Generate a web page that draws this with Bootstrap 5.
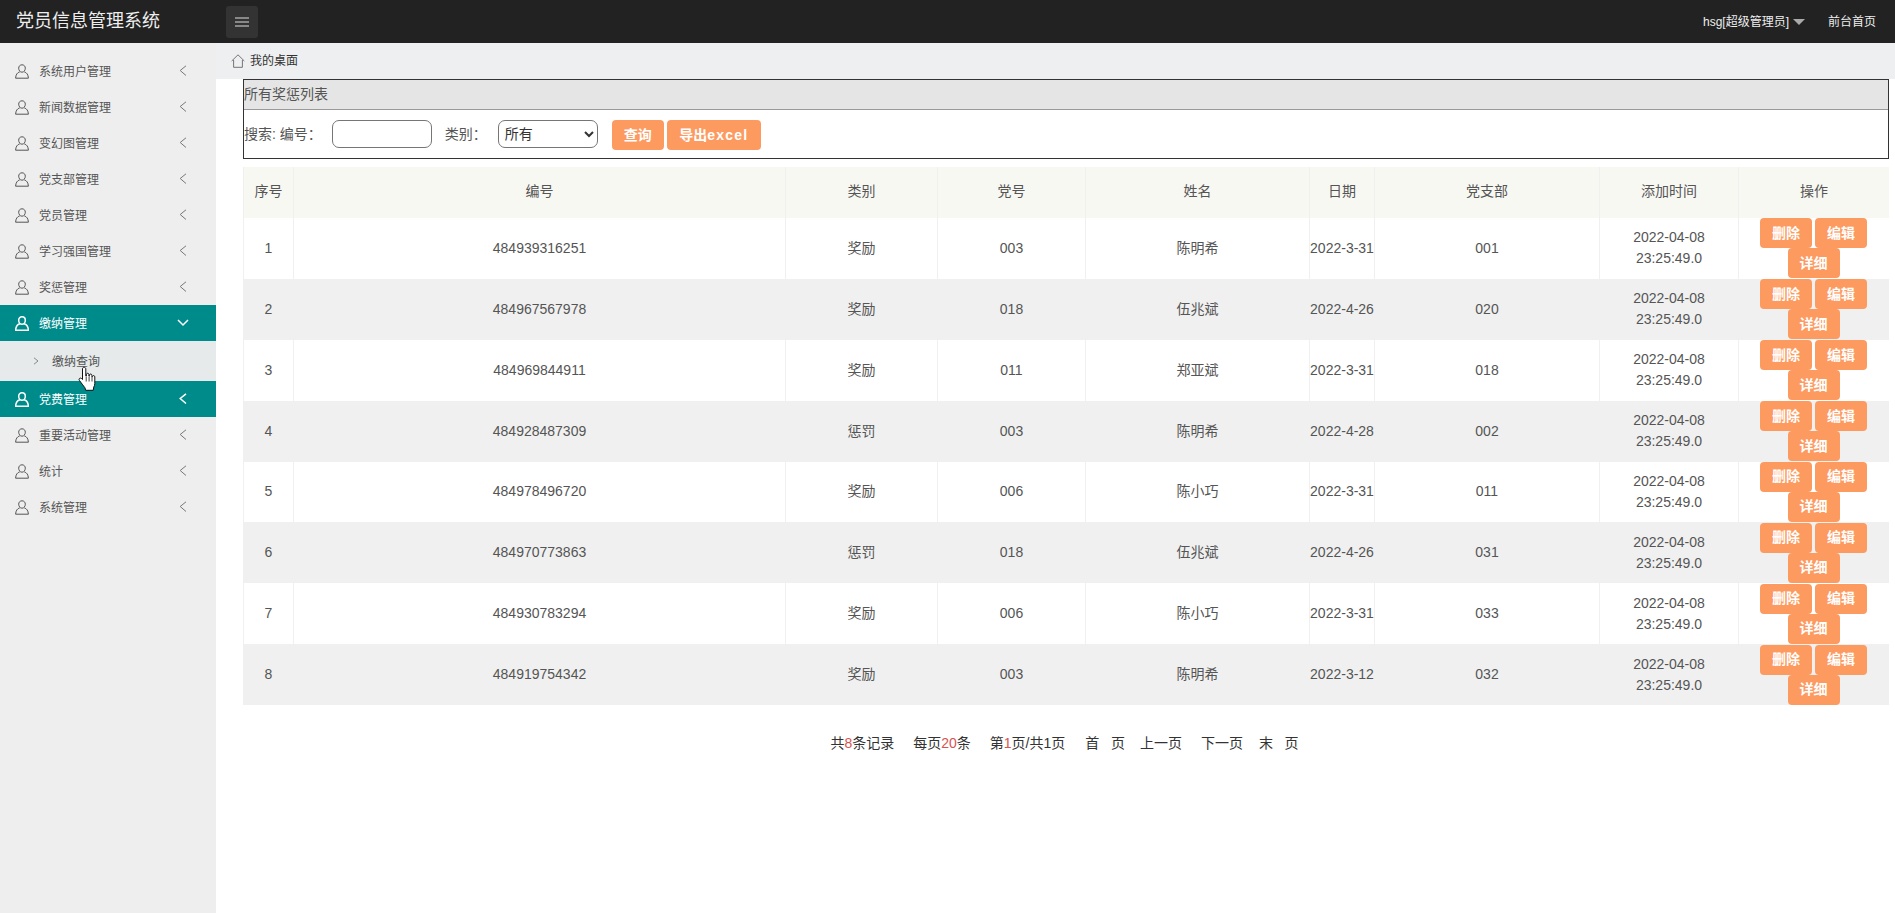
<!DOCTYPE html>
<html lang="zh-CN">
<head>
    <meta charset="UTF-8">
    <title>党员信息管理系统</title>
    <link href="https://cdn.jsdelivr.net/npm/bootstrap@5.3.3/dist/css/bootstrap.min.css" rel="stylesheet">
    <script src="https://cdn.jsdelivr.net/npm/bootstrap@5.3.3/dist/js/bootstrap.bundle.min.js"></script>

    <style>
        body {
            font-family: "Liberation Sans", "Noto Sans CJK SC", sans-serif;
            font-size: 14px;
            color: #333;
            height: 913px;
            overflow: hidden;
        }

        .top-bar {
            height: 43px;
            padding: 0;
            background-color: #222;
            color: #fff;
        }

        .top-title {
            width: 226px;
            padding-left: 16px;
            font-size: 18px;
            color: #eee;
        }

        .menu-toggle {
            width: 32px;
            height: 32px;
            padding: 0;
            background-color: #333;
            border: 0;
            border-radius: 3px;
        }

        .menu-toggle svg { display: block; margin: 0 auto; }

        .top-link {
            font-size: 12px;
            color: #eee;
            text-decoration: none;
        }

        .user-caret {
            width: 0;
            height: 0;
            margin: 0 23px 0 4px;
            border-left: 6px solid transparent;
            border-right: 6px solid transparent;
            border-top: 6px solid #aaa;
        }

        .top-home { margin-right: 19px; }

        .page-wrap { height: 870px; }

        .side-menu {
            width: 216px;
            flex-shrink: 0;
            padding-top: 10px;
            background-color: #eeeeef;
        }

        .side-item {
            height: 36px;
            padding: 0 29px 0 15px;
            font-size: 12px;
            color: #555;
        }

        .side-item .side-label {
            margin-left: 10px;
            padding-top: 2px;
        }

        .side-item.is-open {
            background-color: #008b8b;
            color: #fff;
        }

        .side-sub {
            height: 40px;
            padding-left: 33px;
            font-size: 12px;
            color: #555;
            background-color: #e6eaea;
        }

        .side-sub .side-label {
            margin-left: 13px;
            padding-top: 2px;
        }

        .main-area { min-width: 0; }

        .crumb-bar {
            height: 36px;
            padding-left: 15px;
            font-size: 12px;
            color: #333;
            background-color: #eeeff0;
        }

        .crumb-bar svg { margin-right: 5px; }

        .main-body { padding: 0 6px 0 27px; }

        .filter-box {
            height: 80px;
            border: 1px solid #333;
        }

        .filter-title {
            height: 30px;
            background-color: #e5e5e5;
            border-bottom: 1px solid #999;
            line-height: 29px;
            color: #555;
        }

        .filter-row { padding-top: 10px; color: #555; }

        .filter-row .form-control,
        .filter-row .form-select {
            width: 100px;
            height: 28px;
            padding: 0 4px;
            font-size: 14px;
            color: #333;
            border-color: #767676;
            border-radius: 7px;
            box-shadow: none;
        }

        .filter-row .form-select {
            padding-left: 2px;
            background-image: none;
            -webkit-appearance: auto;
            appearance: auto;
        }

        .label-no { margin: 0 10px 0 0; }
        .label-type { margin: 0 11px 0 13px; }

        .orange-btn {
            height: 30px;
            padding: 0;
            font-size: 14px;
            font-weight: 700;
            color: #fff;
            background-color: #fd9a5f;
            border: 0;
            border-radius: 4px;
        }

        .orange-btn:hover { color: #fff; background-color: #fd9a5f; }

        .btn-query { width: 52px; margin-left: 14px; }
        .btn-export { width: 94px; margin-left: 3px; }
        .wide-word { letter-spacing: 1.200px; }

        .record-table {
            width: 100%;
            margin: 8px 0 0;
            table-layout: fixed;
            color: #555;
        }

        .record-table > :not(caption) > * > * {
            height: 60.875px;
            padding: 0;
            text-align: center;
            vertical-align: middle;
            line-height: 21px;
            color: #555;
            border: 0;
            border-left: 1px solid #f0f0f0;
            box-shadow: none;
            background-color: transparent;
        }

        .record-table > thead > tr > th {
            height: 51px;
            padding-bottom: 2px;
            font-weight: 400;
            background-color: #f8f8f3;
        }

        .record-table > tbody > tr:nth-child(even) > td { background-color: #f0f0f0; }

        .record-table th:nth-child(1) { width: 50px; }
        .record-table th:nth-child(2) { width: 492px; }
        .record-table th:nth-child(3) { width: 152px; }
        .record-table th:nth-child(4) { width: 148px; }
        .record-table th:nth-child(5) { width: 224px; }
        .record-table th:nth-child(6) { width: 65px; }
        .record-table th:nth-child(7) { width: 225px; }
        .record-table th:nth-child(8) { width: 139px; }

        .record-table > tbody > tr > .action-cell {
            padding-right: 1px;
            font-size: 0;
        }

        .action-cell .orange-btn {
            width: 52px;
            margin: 0 1.5px;
            vertical-align: top;
        }

        .page-links {
            margin-top: 28px;
            padding-right: 3px;
            gap: 19px;
            line-height: 20px;
        }

        .page-num { color: #d9534f; }
        .link-first { margin-left: 1px; }
        .link-prev { margin-left: -4px; }
        .link-last { margin-left: -3px; }

        .hand-cursor {
            position: absolute;
            left: 78px;
            top: 366px;
        }
    </style>
</head>
<body>

<nav class="navbar top-bar flex-nowrap">
    <div class="top-title">党员信息管理系统</div>
    <button type="button" class="menu-toggle">
        <svg width="14" height="10" viewBox="0 0 14 10"><path d="M0 1h14M0 5h14M0 9h14" stroke="#ddd" stroke-width="1.2"/></svg>
    </button>
    <div class="d-flex align-items-center ms-auto">
        <a class="top-link" href="#">hsg[超级管理员]</a>
        <span class="user-caret"></span>
        <a class="top-link top-home" href="#">前台首页</a>
    </div>
</nav>

<div class="d-flex page-wrap">
    <aside class="side-menu" id="sideMenu"></aside>

    <main class="main-area flex-grow-1">
        <div class="crumb-bar d-flex align-items-center">
            <svg width="14" height="14" viewBox="0 0 14 14" fill="none" stroke="#666" stroke-width=".9"><path d="M.7 7 7 .8 13.3 7M2.6 6v7.3h8.8V6"/></svg>
            我的桌面
        </div>
        <div class="main-body">
            <div class="filter-box">
                <div class="filter-title">所有奖惩列表</div>
                <form class="filter-row d-flex align-items-start">
                    <label class="label-no lh-lg">搜索: 编号：</label>
                    <input type="text" class="form-control">
                    <label class="label-type lh-lg">类别：</label>
                    <select class="form-select"><option>所有</option></select>
                    <button type="button" class="btn orange-btn btn-query">查询</button>
                    <button type="button" class="btn orange-btn btn-export">导出<span class="wide-word">excel</span></button>
                </form>
            </div>

            <table class="table record-table">
                <thead>
                    <tr>
                        <th>序号</th><th>编号</th><th>类别</th><th>党号</th><th>姓名</th><th>日期</th><th>党支部</th><th>添加时间</th><th>操作</th>
                    </tr>
                </thead>
                <tbody id="recordRows"></tbody>
            </table>

            <div class="page-links d-flex justify-content-center">
                <span>共<span class="page-num">8</span>条记录</span>
                <span>每页<span class="page-num">20</span>条</span>
                <span>第<span class="page-num">1</span>页/共1页</span>
                <span class="link-first">首&nbsp;&nbsp;&nbsp;页</span>
                <span class="link-prev">上一页</span>
                <span>下一页</span>
                <span class="link-last">末&nbsp;&nbsp;&nbsp;页</span>
            </div>
        </div>
    </main>
</div>

<svg class="hand-cursor" width="20" height="26" viewBox="0 0 20 26">
    <path d="M6 1.2c1 0 1.8.8 1.8 1.8v7l.6-.1V8.600c0-1.800 2.500-1.800 2.500 0V10l.5.100V9.300c0-1.700 2.500-1.700 2.500 0v1.300l.5.100c0-1.500 2.400-1.500 2.400.2v6.500c0 1.500-.4 2.600-1 3.600l-.6 3.300H7.700l-.8-2.600C5.500 20 3 16.500 1.300 14.300c-1-1.400.8-3 2.200-1.800l1 1V3c0-1 .6-1.800 1.500-1.800z" fill="#fff" stroke="#111" stroke-width="1"/>
    <path d="M8.200 10.500v5M11.100 10.500v5M14 10.500v5" stroke="#111" stroke-width=".8"/>
</svg>

<script>
    const userIcon = color => `<svg width="14" height="15" viewBox="0 0 14 15" fill="none" stroke="${color}" stroke-width="${color === '#fff' ? 1.500 : 1}"><path d="M7 .8c2 0 3.300 1.400 3.300 3.400S9 8.200 7 8.200 3.700 6.200 3.700 4.200 5 .8 7 .8z"/><path d="M4.800 7.800C2.300 8.600.8 10.500.6 14.200h12.800c-.2-3.700-1.700-5.600-4.200-6.400"/></svg>`;
    const leftArrow = (color, width) => `<svg class="ms-auto" width="8" height="12" viewBox="0 0 8 12" fill="none" stroke="${color}" stroke-width="${width}"><path d="M7 .8 1.200 5.500 7 10.500"/></svg>`;
    const downArrow = `<svg class="ms-auto" width="12" height="8" viewBox="0 0 12 8" fill="none" stroke="#fff" stroke-width="1.500" style="margin-right:-2px"><path d="M1 1l5 5 5-5"/></svg>`;

    const menuItems = [
        { name: '系统用户管理' },
        { name: '新闻数据管理' },
        { name: '变幻图管理' },
        { name: '党支部管理' },
        { name: '党员管理' },
        { name: '学习强国管理' },
        { name: '奖惩管理' },
        { name: '缴纳管理', open: true, sub: '缴纳查询' },
        { name: '党费管理', active: true },
        { name: '重要活动管理' },
        { name: '统计' },
        { name: '系统管理' }
    ];

    document.getElementById('sideMenu').innerHTML = menuItems.map(item => {
        const highlighted = item.open || item.active;
        const arrow = item.open ? downArrow : (item.active ? leftArrow('#fff', 1.5) : leftArrow('#777', 1));
        let html = `<div class="side-item d-flex align-items-center ${highlighted ? 'is-open' : ''}">
            ${userIcon(highlighted ? '#fff' : '#555')}<span class="side-label">${item.name}</span>${arrow}</div>`;
        if (item.sub) {
            html += `<div class="side-sub d-flex align-items-center">
                <svg width="6" height="8" viewBox="0 0 6 8" fill="none" stroke="#888"><path d="M1 .8 5 4 1 7.200"/></svg>
                <span class="side-label">${item.sub}</span></div>`;
        }
        return html;
    }).join('');

    const records = [
        ['484939316251', '奖励', '003', '陈明希', '2022-3-31', '001'],
        ['484967567978', '奖励', '018', '伍兆斌', '2022-4-26', '020'],
        ['484969844911', '奖励', '011', '郑亚斌', '2022-3-31', '018'],
        ['484928487309', '惩罚', '003', '陈明希', '2022-4-28', '002'],
        ['484978496720', '奖励', '006', '陈小巧', '2022-3-31', '011'],
        ['484970773863', '惩罚', '018', '伍兆斌', '2022-4-26', '031'],
        ['484930783294', '奖励', '006', '陈小巧', '2022-3-31', '033'],
        ['484919754342', '奖励', '003', '陈明希', '2022-3-12', '032']
    ];

    document.getElementById('recordRows').innerHTML = records.map((row, i) => `<tr>
        <td>${i + 1}</td>
        ${row.map(value => `<td>${value}</td>`).join('')}
        <td>2022-04-08<br>23:25:49.0</td>
        <td class="action-cell">
            <button type="button" class="btn orange-btn">删除</button><button type="button" class="btn orange-btn">编辑</button><br>
            <button type="button" class="btn orange-btn">详细</button>
        </td>
    </tr>`).join('');
</script>

</body>
</html>
